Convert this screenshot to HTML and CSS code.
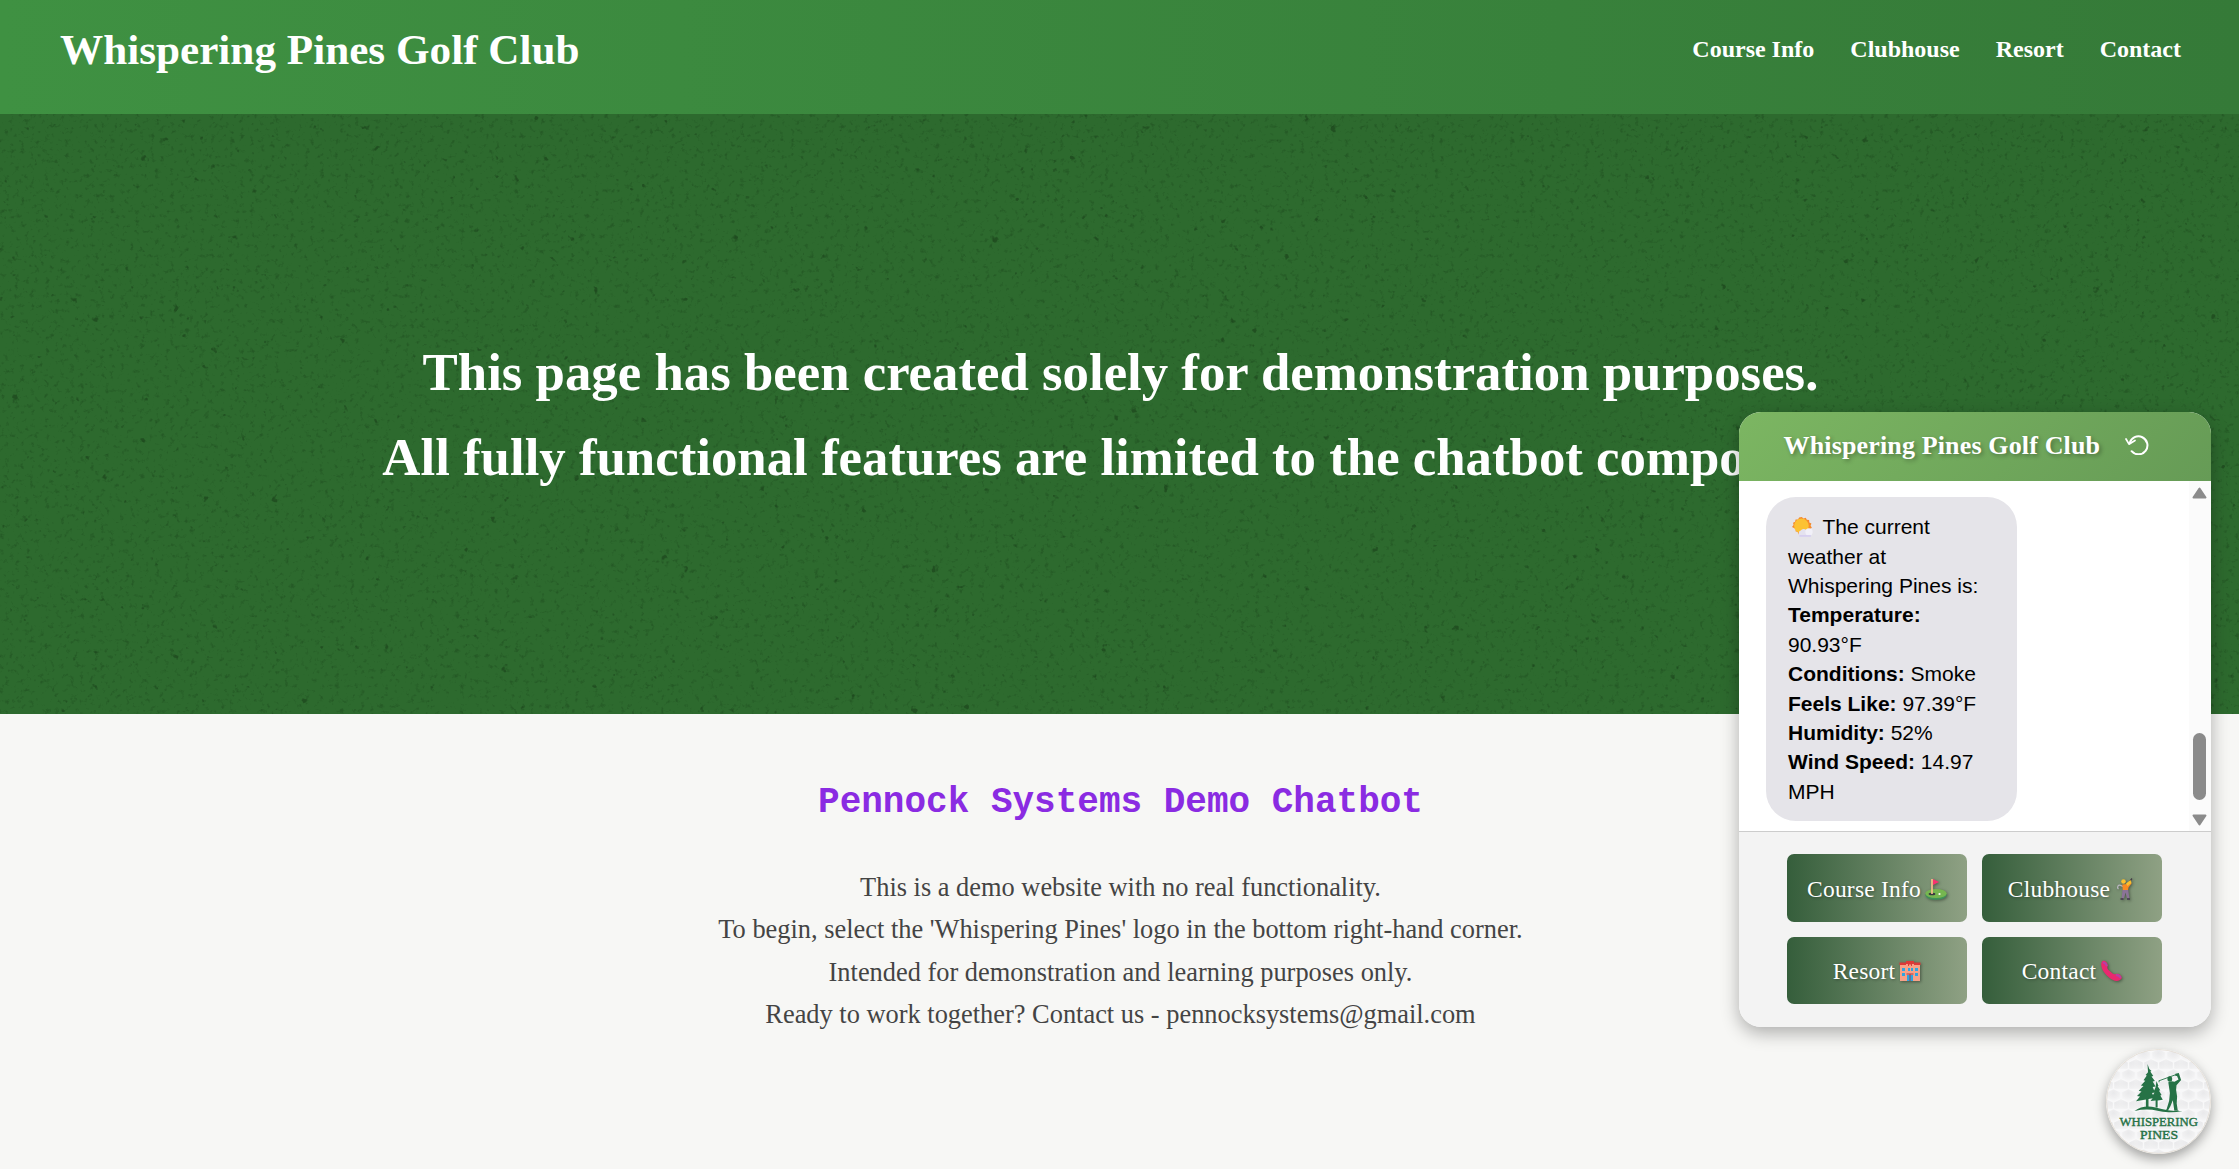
FILE: index.html
```html
<!DOCTYPE html>
<html lang="en">
<head>
<meta charset="utf-8">
<title>Whispering Pines Golf Club</title>
<link rel="stylesheet" href="styles.css">
</head>
<body>
<header class="site-header">
  <h1 class="site-title">Whispering Pines Golf Club</h1>
  <nav class="site-nav"><a>Course Info</a><a>Clubhouse</a><a>Resort</a><a>Contact</a></nav>
</header>
<section class="hero">
  <svg class="hero-texture" width="100%" height="100%" aria-hidden="true">
    <filter id="grain" x="0" y="0" width="100%" height="100%" color-interpolation-filters="sRGB">
      <feTurbulence type="fractalNoise" baseFrequency="0.2" numOctaves="3" seed="8"/>
      <feColorMatrix values="0 0 0 0 0.08  0 0 0 0 0.22  0 0 0 0 0.08  -4 0 0 0 1.65"/>
    </filter>
    <filter id="fleck" x="0" y="0" width="100%" height="100%" color-interpolation-filters="sRGB">
      <feTurbulence type="fractalNoise" baseFrequency="0.1" numOctaves="3" seed="21"/>
      <feColorMatrix values="0 0 0 0 0.1  0 0 0 0 0.25  0 0 0 0 0.1  -9 0 0 0 2.25"/>
    </filter>
    <rect width="100%" height="100%" filter="url(#grain)" opacity=".3"/>
    <rect width="100%" height="100%" filter="url(#fleck)" opacity=".6"/>
  </svg>
  <h2 class="hero-text">This page has been created solely for demonstration purposes.<br>All fully functional features are limited to the chatbot component.</h2>
</section>
<main class="about">
  <h2 class="about-title">Pennock Systems Demo Chatbot</h2>
  <p class="about-text">This is a demo website with no real functionality.<br>To begin, select the 'Whispering Pines' logo in the bottom right-hand corner.<br>Intended for demonstration and learning purposes only.<br>Ready to work together? Contact us - pennocksystems@gmail.com</p>
</main>

<aside class="chat">
  <div class="chat-header">
    <span class="chat-title">Whispering Pines Golf Club</span>
    <svg class="reset" viewBox="0 0 24 20" width="24" height="20" fill="none" stroke="#fff" stroke-width="2" stroke-linecap="round" stroke-linejoin="round"><path d="M4.700 8.200A9 9 0 1 1 6.600 16.200"/><path d="M1 4l3 5.200 6-3.700" stroke-width="1.700"/></svg>
  </div>
  <div class="chat-body">
    <div class="bubble"><svg class="weather" viewBox="0 0 20 19" width="21" height="20"><path d="M9.300 0l1.700 1.400 2.100-.7 1 2 2.200.2.200 2.200 2 1-.8 2.200 1.200 1.700-1.600 1.600.1 2.200-2.200.6-1 2-2.200-.4-1.900 1.400-1.700-1.500-2.200.4-.8-2-2.100-.8.4-2.200L0 9.400l1.500-1.700-.5-2.200 2-1 .4-2.200 2.300.1 1.100-2z" fill="#f58a2c"/><circle cx="9" cy="8.400" r="7" fill="#fcc233"/><path d="M8 18.500a3 3 0 0 1 .3-5.600 3.400 3.400 0 0 1 5.200-.6 3.700 3.700 0 0 1 2.900 6.200z" fill="#e4e2ef"/><circle cx="16.200" cy="14.200" r="3.500" fill="#f1f0f8"/><path d="M7 18h11" stroke="#d2c9f0" stroke-width="1.300"/></svg>The current weather at Whispering Pines is:<br><b>Temperature:</b> 90.93°F<br><b>Conditions:</b> Smoke<br><b>Feels Like:</b> 97.39°F<br><b>Humidity:</b> 52%<br><b>Wind Speed:</b> 14.97 MPH</div>
    <div class="scrollbar">
      <svg width="15" height="12" viewBox="0 0 15 12"><path d="M7.500 1.500L13.500 10.500H1.500z" fill="#8b8b8b" stroke="#8b8b8b" stroke-width="2" stroke-linejoin="round"/></svg>
      <span class="thumb"></span>
      <svg width="15" height="12" viewBox="0 0 15 12"><path d="M7.500 10.500L13.500 1.500H1.500z" fill="#8b8b8b" stroke="#8b8b8b" stroke-width="2" stroke-linejoin="round"/></svg>
    </div>
  </div>
  <div class="chat-actions">
    <button class="action">Course Info<svg class="emoji" viewBox="0 0 22 22"><ellipse cx="11" cy="17" rx="10.700" ry="4.800" fill="#3f9159"/><ellipse cx="11" cy="15.500" rx="10.700" ry="4.500" fill="#76b650"/><ellipse cx="7" cy="16" rx="3.400" ry="1.300" fill="#393940"/><circle cx="14.500" cy="16" r="1.100" fill="#fff"/><path d="M7 1v15" stroke="#f4c08a" stroke-width="1.700"/><path d="M8 1l6 3-6 3z" fill="#f8316f"/></svg></button>
    <button class="action">Clubhouse<svg class="emoji" viewBox="0 0 22 22"><path d="M15 4.500L18 .5" stroke="#433b45" stroke-width="1.300"/><path d="M9 8.500Q5 6 4 8T4.500 11" stroke="#b9b6c0" stroke-width="1.200" fill="none"/><path d="M8.300 6.500l5-.5 3-2.500 1.200 2-3 4-.5 3H8.800z" fill="#f98a22"/><circle cx="9.500" cy="3.500" r="2.300" fill="#fbc12f"/><path d="M12 5.500l4.500-3.500 1 3-4 3z" fill="#fbbf2c"/><path d="M8.500 12H14.300l1 8.500h-2.300l-1.500-6-1.500 6H7.600z" fill="#8b7397"/><path d="M6.500 21H9.500m3.500 0h3" stroke="#44374c" stroke-width="1.400"/></svg></button>
    <button class="action">Resort<svg class="emoji" viewBox="0 0 22 22"><path d="M1 4h6V2h8v2h6v17H1z" fill="#f8a188"/><path d="M.5 2.500H7V1h8v1.500h6.500V5H15V4H7v1H.5z" fill="#dc3939"/><path d="M9.500 2v4m3-4v4m-3-2h3" stroke="#dc3939"/><path d="M3 8h3v3H3zm0 5h3v3H3zm6-5h2v3H9zm3 0h2v3h-2zm4 0h3v3h-3zm0 5h3v3h-3zm-8 2h6v6H8z" fill="#31a4df"/><path d="M7.500 14h7M11 14v7" stroke="#ae3640"/></svg></button>
    <button class="action">Contact<svg class="emoji" viewBox="0 0 22 22"><path d="M2.500 1C5.500-.5 8.500 4 7.500 6.500Q7 8 8 9.500l4.500 4q1.700 1.300 3.500.5c3-1 6.500 2.500 5.500 4.500-2.500 4-8.500 3-13.500-2C2 11.500-.5 4 2.500 1z" fill="#e9286f"/><path d="M3 3Q5 2 7 6M16 15q3.500.2 4.500 3" stroke="#b440a8" stroke-width="2" fill="none"/></svg></button>
  </div>
</aside>

<svg class="launcher" viewBox="0 0 105 105" width="105" height="105">
  <defs>
    <radialGradient id="dimple" cx=".5" cy=".3" r=".65"><stop offset="0" stop-color="#e9e9eb"/><stop offset=".6" stop-color="#f0f0f1"/><stop offset="1" stop-color="#f7f7f8"/></radialGradient>
    <pattern id="ball" width="15" height="20" patternUnits="userSpaceOnUse"><path d="M7.500 .200l6.800 3.200v6l-6.800 3.200-6.800-3.200v-6z" fill="url(#dimple)"/><path d="M0 10.200l6.800 3.200v6L0 22.600l-6.800-3.200v-6zM15 10.200l6.800 3.200v6L15 22.600l-6.800-3.200v-6z" fill="url(#dimple)"/></pattern>
  </defs>
  <circle cx="52.500" cy="52.500" r="52" fill="#f8f8f9"/>
  <circle cx="52.500" cy="52.500" r="52" fill="url(#ball)" stroke="#e2dbd0" stroke-width=".8"/>
  <g fill="#267246">
    <path d="M41.500 15l1.800 5 2.200 2-1.200.6 3 4.400-1.800.4 3.400 4.600-2.200.5 2.800 5-2.800.4 2.300 5.600-3 .6 2.500 5-6 1v9.500h-2.600v-9l-9.900 1.600 4-4.700-3-.6 4.500-4.500-2.800-.6 4.800-4.800-2.600-.6 4.400-4.600-1.800-.5 3.300-4.700-1.200-.6 2.400-2.800z"/>
    <path d="M50.500 32l2 5-.8.300 2.600 4-1.300.4 2.600 4.300-1.300.5 2.500 4.200-5.200.8v7h-2v-7l-5 .5 2.800-4-1.400-.6 2.600-4-1.200-.5 2.100-4.400z"/>
    <path d="M28.500 62q9-6.500 21-3.500 13 3.800 27 3.600-7 1.500-14 1.200-6-.2-11-1.600-11-2.300-23 .3z"/>
    <ellipse cx="63.800" cy="30" rx="2.400" ry="2.700"/>
    <path d="M62.300 33.200l3.400-1 2.800.6 4-2.300-1.500-3.600-1.800-.2.200-1.900 3.400-.7 2.300 7-4.600 5.200-.4 4.700 1 6.500-.4 7 1 6.500 1.400.8h-4.800l-1-7-.5-3.500-2.400 6-2.400 4.300-3 .3 1.600-1.600 2.500-8.300.8-8z"/>
    <path d="M53 31.800l17-6.200M53 31.500v1.800" stroke="#267246" stroke-width=".9"/>
  </g>
  <text class="ball-text" x="52.700" y="77" textLength="78.500" lengthAdjust="spacingAndGlyphs">WHISPERING</text>
  <text class="ball-text" x="53" y="89.700" textLength="38" lengthAdjust="spacingAndGlyphs">PINES</text>
</svg>
</body>
</html>
```
FILE: styles.css
```css
* { box-sizing: border-box; margin: 0; padding: 0; }
body { font: 24px/1.6 "Liberation Serif", serif; background: #f7f7f5; color: #444; height: 1169px; overflow: hidden; }
.site-header { height: 114px; padding: 14.500px 58px 0 60px; display: flex; justify-content: space-between; align-items: flex-start; background: linear-gradient(90deg, #3f9142, #357a38); color: #fff; }
.site-title { font-size: 43.200px; line-height: 69px; }
.site-nav { display: flex; gap: 36px; font-weight: bold; padding-top: 15px; }
.hero { height: 600px; background: #2d6a2e; display: flex; align-items: center; justify-content: center; text-align: center; color: #fff; position: relative; }
.hero-texture { position: absolute; inset: 0; }
.hero-text { position: relative; font-size: 52.800px; line-height: 84.480px; white-space: nowrap; padding: 1px 0 0 2px; }
.about { padding: 60px 0 0 2px; text-align: center; }
.about-title { font: bold 36px/57.600px "Liberation Mono", monospace; color: #8a2be2; }
.about-text { margin-top: 34.500px; font-size: 26.400px; line-height: 42.240px; }
.chat { position: absolute; left: 1739px; top: 412px; width: 472px; height: 615px; border-radius: 22px; overflow: hidden; background: #fff; box-shadow: 0 6px 18px rgba(0,0,0,.3); display: flex; flex-direction: column; }
.chat-header { height: 69px; flex: none; padding-left: 44.500px; background: linear-gradient(135deg, #7cb662, #669b56); color: #fff; display: flex; align-items: center; gap: 25px; }
.chat-title { font-weight: bold; font-size: 26px; letter-spacing: .15px; line-height: 40px; text-shadow: 2px 2px 4px rgba(0,0,0,.3); padding-bottom: 1px; }
.reset { margin-bottom: 3px; }
.chat-body { height: 350px; flex: none; display: flex; justify-content: space-between; align-items: stretch; }
.bubble { width: 251px; height: 323.500px; margin: 16px 0 0 27px; padding: 15.200px 22px; border-radius: 30px; background: #e5e4e9; color: #000; font: 21px/29.400px "Liberation Sans", sans-serif; }
.weather { margin: 0 10px 0 3.500px; vertical-align: -3px; }
.scrollbar { width: 22.500px; background: #fbfbfb; display: flex; flex-direction: column; align-items: center; padding: 6px 0 5px; }
.thumb { width: 13px; height: 67px; border-radius: 7px; background: #8b8b8b; margin: 234px 0 auto; }
.chat-actions { flex: 1; border-top: 1px solid #ccc; background: #f3f3f3; padding: 22px 0 0 48px; display: grid; grid-template-columns: 180px 180px; grid-auto-rows: 67.500px; gap: 15px; }
.action { border: 0; border-radius: 7px; background: linear-gradient(90deg, #355e3b, #8fa184); color: #fff; font: 23.500px/30px "Liberation Serif", serif; letter-spacing: .2px; text-shadow: 1px 1px 3px rgba(0,0,0,.35); display: flex; align-items: center; justify-content: center; gap: 4px; padding-top: 2px; }
.emoji { width: 22px; height: 22px; filter: drop-shadow(1px 1px 1.500px rgba(0,0,0,.4)); }
.launcher { position: absolute; left: 2106px; top: 1049px; border-radius: 50%; box-shadow: 0 5px 12px rgba(0,0,0,.35); }
.ball-text { font: 13px "Liberation Serif", serif; fill: #267246; stroke: #267246; stroke-width: .4px; text-anchor: middle; }
```
